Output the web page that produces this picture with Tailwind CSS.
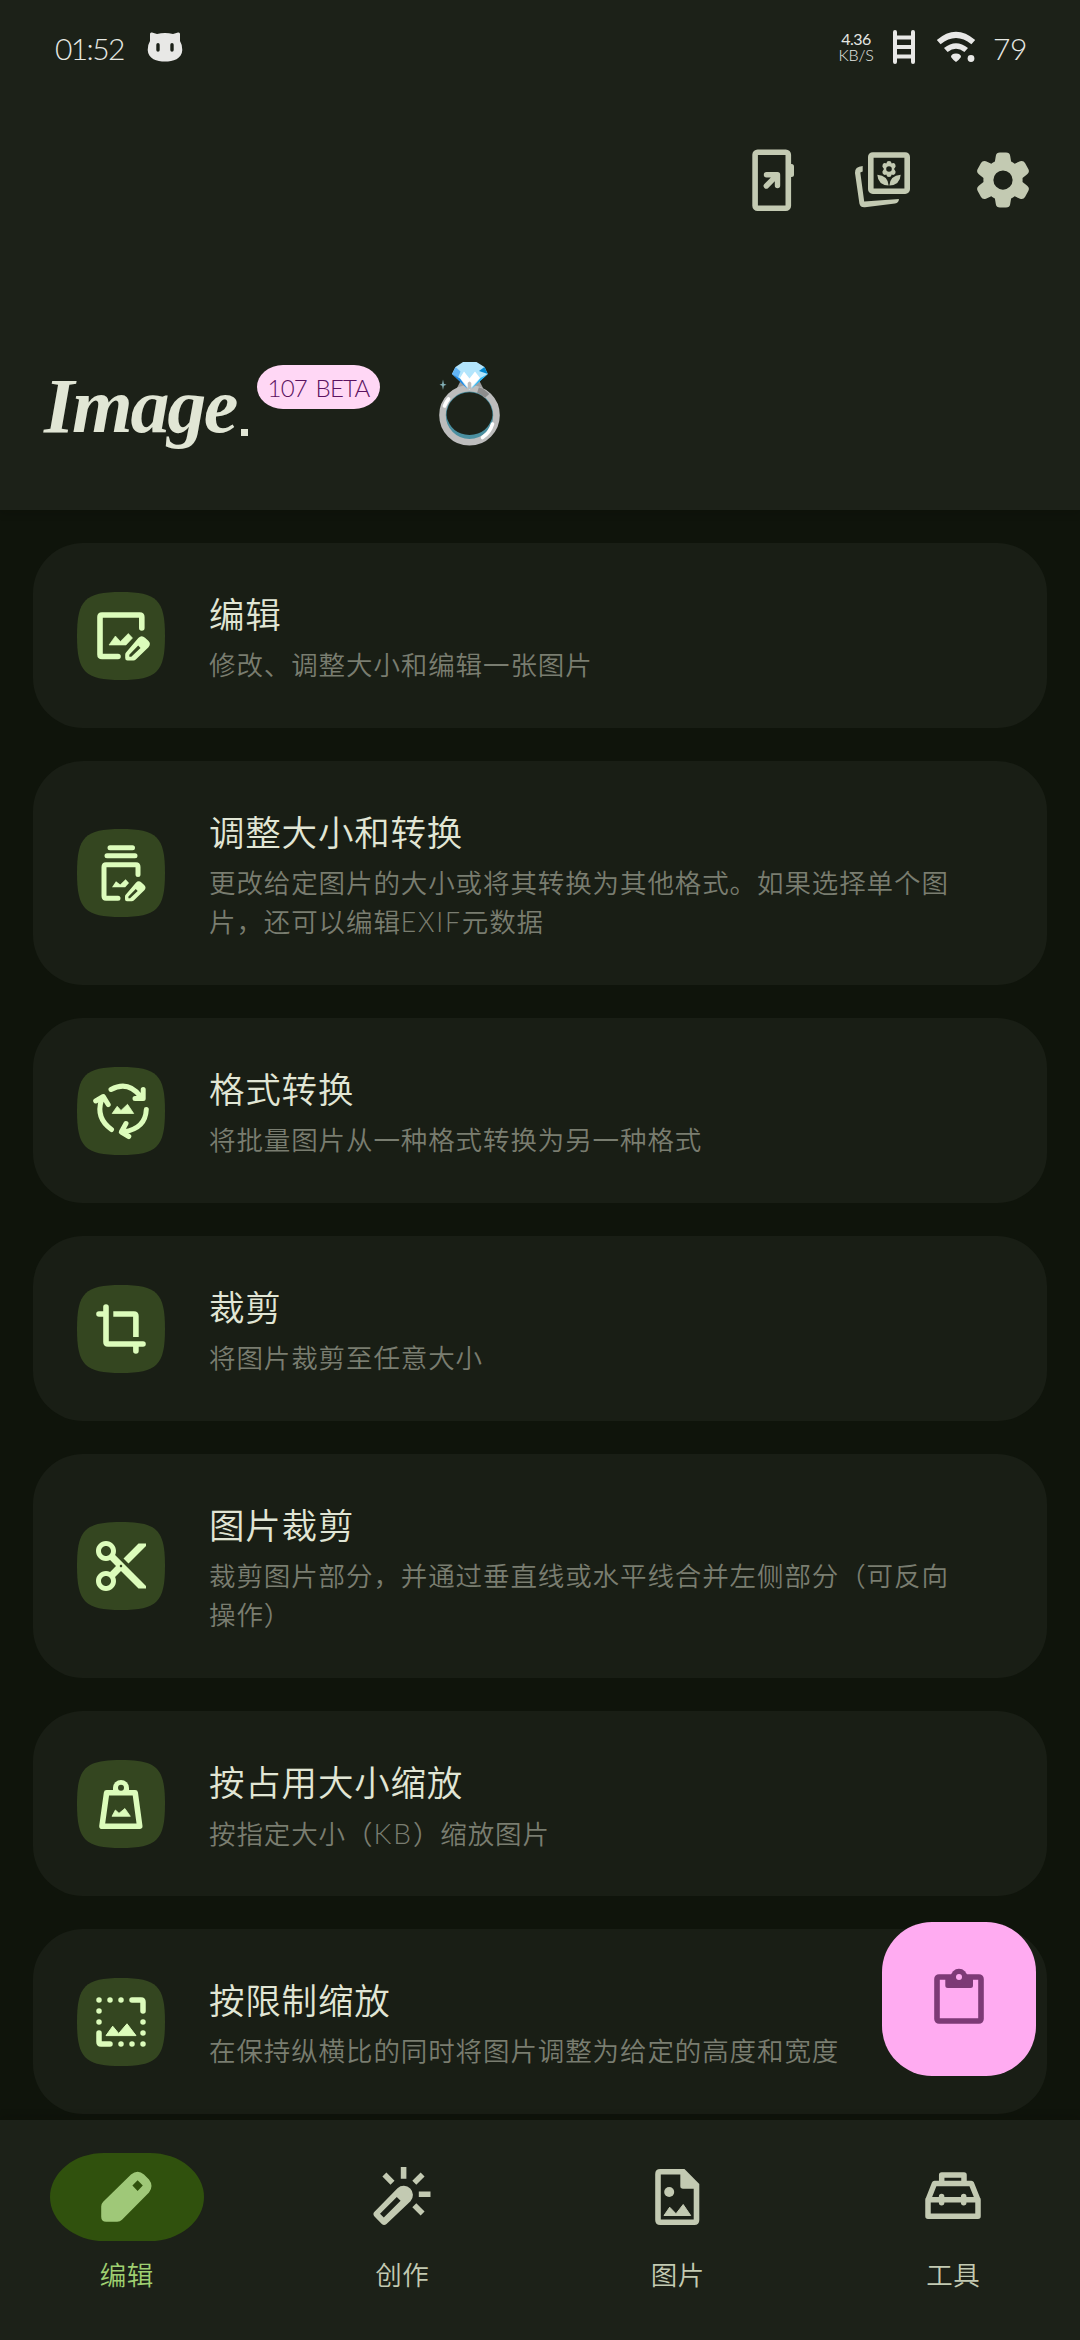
<!DOCTYPE html>
<html lang="zh-CN">
<head>
<meta charset="utf-8">
<title>Image</title>
<script src="https://cdn.jsdelivr.net/npm/@tailwindcss/browser@4"></script>
</head>
<body class="bg-[#0f140b] font-['Lato','Noto_Sans_CJK_SC',sans-serif] font-[350]">
<svg width="0" height="0" class="absolute">
  <defs>
    <path id="squircle" fill="#344620" d="M44 0C80 0 88 8 88 44S80 88 44 88 0 80 0 44 8 0 44 0z"/>
    <path id="pencil" fill-rule="evenodd" d="M48.2 66V62.8Q48.2 61.5 49 60.6L61.3 46Q64.6 42.6 68 45.8L71.3 48.8Q74.4 51.8 71.5 55.2L58.8 67.5Q57.8 68.5 56.5 68.5H50.5Q48.2 68.5 48.2 66zM52.3 64.8H54.3L63.5 56 61.2 53.6 52.3 62.8z"/>
  </defs>
</svg>
<div class="relative flex h-[2340px] w-[1080px] flex-col overflow-hidden">

  <header class="z-10 flex h-[510px] shrink-0 flex-col bg-[#1c2118] shadow-[0_3px_8px_rgba(10,8,4,0.2)]">
    <!-- status bar -->
    <div class="flex h-[94px] items-center pl-[55px] pr-[55px] text-[#e6e8e3]">
      <span class="w-[92px] pt-[2px] text-[30px] leading-none tracking-[-1.600px]">01:52</span>
      <svg class="h-[30px] w-[36px]" viewBox="0 0 36 30" fill="#e8e8e6"><path fill-rule="evenodd" d="M3 9V2Q3 0 5 .5L10 2Q18 .2 26 2L31 .5Q33 0 33 2V9Q35.500 13 35.300 18C35 27 26 29.500 18 29.500S1 27 .7 18Q.5 13 3 9zM11 11a1.700 1.700 0 0 0-1.700 1.700v5.400a1.700 1.700 0 0 0 3.400 0v-5.400A1.700 1.700 0 0 0 11 11zM25 11a1.700 1.700 0 0 0-1.700 1.700v5.400a1.700 1.700 0 0 0 3.400 0v-5.400A1.700 1.700 0 0 0 25 11z"/></svg>
      <div class="ml-auto flex items-center">
        <div class="flex w-[34px] flex-col items-center text-center text-[16px] leading-[16px]">
          <span class="font-normal tracking-[-0.500px]">4.36</span>
          <span class="tracking-[-0.200px]">KB/S</span>
        </div>
        <svg class="ml-[18px] h-[36px] w-[26px]" viewBox="0 0 26 36" fill="none" stroke="#e8e8e6" stroke-width="4" stroke-linecap="round"><path d="M4 3V33M22 3V33M4 8.500H22M4 18H22M4 27.500H22"/></svg>
        <svg class="ml-[19px] h-[32px] w-[40px]" viewBox="0 0 40 32" fill="#e8e8e6"><path d="M.8 9Q20-7.500 39.200 9L35.400 13.300Q20 .8 4.600 13.300zM8 17Q20 7.500 32 17L28.400 21Q20 14.500 11.600 21zM15 26Q15 22.500 20 22.500T25 26Q23 29 20 31 17 29 15 26z"/><circle cx="35" cy="27.500" r="3.400"/></svg>
        <span class="ml-[17px] w-[32px] pt-[2px] text-[30px] leading-none tracking-[-0.500px]">79</span>
      </div>
    </div>
    <!-- toolbar actions -->
    <div class="flex h-[172px] items-center justify-end pr-[44px] text-[#c3cab2]">
      <svg class="mr-[44px] h-[66px] w-[66px]" viewBox="739 147 66 66" fill="none" stroke="currentColor"><rect x="755.100" y="152.200" width="33.200" height="56" rx="2.500" stroke-width="5.600"/><path fill="currentColor" stroke="none" d="M790 164h1.500q2.500 0 2.500 2.500v8q0 2.500-2.500 2.500H790z"/><path d="M766.500 174.700H777.500V185.500M777 175.200 766.300 186" stroke-width="5.400" stroke-linecap="round" stroke-linejoin="round"/></svg>
      <svg class="mr-[55px] h-[66px] w-[66px]" viewBox="849 147 66 66" fill="none" stroke="currentColor"><rect x="870.800" y="155" width="36.400" height="36.200" rx="2" stroke-width="5.600"/><path fill="currentColor" stroke="none" d="M862.700 166V171.500L860.300 172.500 864.200 201.600 898.900 199Q899 202.800 895 203.500L865 207.300Q860.500 207.800 859.400 203.500L855 173Q854.500 166.500 862.700 166z"/><g fill="currentColor" stroke="none"><path fill-rule="evenodd" d="M889 161q2.300 0 2.700 2.400 2.300-1 3.600 1 1 2-.7 3.800l-.7.800.7.800q1.700 1.900.7 3.800-1.300 2-3.600 1-.4 2.500-2.700 2.500t-2.700-2.500q-2.300 1-3.600-1-1-1.900.7-3.800l.7-.8-.7-.8q-1.700-1.800-.7-3.800 1.300-2 3.600-1 .4-2.400 2.700-2.400zM889 166.200a2.800 2.800 0 1 0 0 5.600 2.800 2.800 0 1 0 0-5.600z"/><path d="M877.300 174.700Q888 175.500 888.600 185.500 878 185 877.300 174.700zM900.700 174.700Q890 175.500 889.400 185.500 900 185 900.700 174.700z"/></g></svg>
      <svg class="h-[66px] w-[66px]" viewBox="0 0 24 24" fill="currentColor"><path fill-rule="evenodd" d="M10.900 22q-1.300 0-1.500-1.200l-.35-2.100q-.7-.3-1.300-.75l-1.950.85q-1.200.4-1.800-.6l-1.200-2.200Q2.200 14.900 3.200 14.100l1.700-1.350q-.05-.75 0-1.500L3.200 9.900Q2.200 9.100 2.800 8l1.200-2.200q.6-1 1.800-.6l1.950.85q.6-.45 1.300-.75L9.400 3.200Q9.600 2 10.900 2h2.200q1.300 0 1.500 1.200l.35 2.100q.7.3 1.300.75l1.950-.85q1.200-.4 1.800.6L21.200 8q.6 1.100-.4 1.900l-1.700 1.350q.05.75 0 1.500l1.700 1.350q1 .8.400 1.900L20 18.200q-.6 1-1.800.6l-1.950-.85q-.6.45-1.300.75l-.35 2.100Q14.400 22 13.100 22zM12 8.500a3.500 3.500 0 1 0 0 7 3.500 3.500 0 1 0 0-7z"/></svg>
    </div>
    <!-- title -->
    <div class="flex flex-1 items-start pl-[44px] pt-[94px]">
      <h1 class="flex w-[213px] pt-[2px] text-[#e1e6d5]"><span class="font-['Liberation_Serif',serif] text-[78px] font-bold italic leading-[88px] tracking-[-2.300px]">Image</span><span class="ml-[5px] mt-[67px] h-[7px] w-[7px] overflow-hidden bg-[#e1e6d5] text-[6px] leading-none text-transparent">.</span></h1>
      <span class="mt-[5px] flex h-[44px] w-[123px] items-center justify-center rounded-[26px/22px] bg-[#ffd7f5] pt-px text-[24px] leading-none tracking-[-0.800px] [word-spacing:3px] text-[#5b1260]">107 BETA</span>
      <svg class="-mt-[2px] ml-[53px] h-[90px] w-[72px]" viewBox="432 358 72 90"><path fill="#9e9e9e" d="M456 388 460 380H478L482 388z"/><circle cx="468.500" cy="415.300" r="24" fill="none" stroke="#4a8fa0" stroke-width="2"/><path fill="#4a8fa0" d="M445 415Q445 438 468.500 439.500 492 438 492 415 487 434.500 468.500 435 450 434.500 445 415z"/><circle cx="468.500" cy="415.300" r="27" fill="none" stroke="#bdbdbd" stroke-width="6.600"/><path d="M477 390Q482 391.500 486 396" fill="none" stroke="#8d8d8d" stroke-width="6"/><path d="M443.500 406Q445 402 447.500 399M481.500 437.500Q489 432.500 491.500 424" fill="none" stroke="#fff" stroke-width="3.600" stroke-linecap="round"/><path fill="#b3e5fc" d="M462 362H475.500L483.500 367 486.800 374 468.500 390 451 374 454.500 367z"/><path fill="#64b5f6" d="M451 374 454.500 367 459.500 371.500 457 378z"/><path fill="#1e88e5" d="M451 374 459 378.500 466.500 389z"/><path fill="#0288d1" d="M486.800 374 483.500 367 478 371z"/><path fill="#29b6f6" d="M486.800 374 479.500 378 470.500 389z"/><path fill="#fff" d="M459 378 463 371.500 468.500 378.500 474 371.500 479 378 470.500 387H466.500z"/><path fill="#bdbdbd" d="M466.700 389V383Q468.500 380 470.300 383V389z"/><path fill="#82aeb5" d="M442 379.500 442.900 383.800 445.500 384.800 442.900 385.800 442 390 441.100 385.800 438.500 384.800 441.100 383.800z"/></svg>
    </div>
  </header>

  <main class="flex h-[1610px] shrink-0 flex-col gap-[33px] overflow-hidden px-[33px] pt-[33px]">
    <section class="flex h-[185px] shrink-0 items-center rounded-[50px] bg-[#191e15] pl-[44px]">
      <svg class="h-[88px] w-[88px] shrink-0" viewBox="0 0 88 88" fill="#dcfcbb"><use href="#squircle"/><path d="M64.800 36V25Q64.800 23 62.800 23H25Q23 23 23 25V62.500Q23 64.500 25 64.500H41" fill="none" stroke="#dcfcbb" stroke-width="5.600" stroke-linecap="round"/><path d="M32 53 38.400 44 43.400 49.500 51.300 41.500 55.500 46 49 53z" stroke="#dcfcbb" stroke-width=".6" stroke-linejoin="round"/><use href="#pencil"/></svg>
      <div class="ml-[44px] w-[760px] pt-[4px]"><h2 class="text-[35.500px] leading-[50px] tracking-[0.800px] text-[#e1e6d5]">编辑</h2><p class="mt-[6px] text-[26.500px] leading-[39px] tracking-[0.900px] text-[#797d70]">修改、调整大小和编辑一张图片</p></div>
    </section>

    <section class="flex h-[224px] shrink-0 items-center rounded-[50px] bg-[#191e15] pl-[44px]">
      <svg class="h-[88px] w-[88px] shrink-0" viewBox="0 0 88 88" fill="#dcfcbb"><use href="#squircle"/><path d="M33 18.700H55.500M30 26.800H58M61 45.500V38Q61 35.700 59 35.700H29Q27 35.700 27 38V67Q27 69.200 29 69.200H41" fill="none" stroke="#dcfcbb" stroke-width="5" stroke-linecap="round"/><path d="M35 58.300 39 52.300 43.200 55.500 48.600 50.300 52 54 48.200 58.300z"/><use href="#pencil" transform="translate(8 15.500) scale(.83)"/></svg>
      <div class="ml-[44px] w-[760px] pt-[4px]"><h2 class="text-[35.500px] leading-[50px] tracking-[0.800px] text-[#e1e6d5]">调整大小和转换</h2><p class="mt-[6px] text-[26.500px] leading-[39px] tracking-[0.900px] text-[#797d70]">更改给定图片的大小或将其转换为其他格式。如果选择单个图<br>片，还可以编辑<span class="tracking-[1.800px]">EXIF</span>元数据</p></div>
    </section>

    <section class="flex h-[185px] shrink-0 items-center rounded-[50px] bg-[#191e15] pl-[44px]">
      <svg class="h-[88px] w-[88px] shrink-0" viewBox="0 0 88 88" fill="#dcfcbb"><use href="#squircle"/><path d="M34 22.500Q51 13.500 63 29M66.200 22.500V31.500H58M18.700 34 26.300 29.500 31.200 37.500M24.500 33Q18.500 51 34.500 62.500M49 56.500 44.300 65 51.800 69.500M47 64.700Q68.500 61.500 69.300 42.500" fill="none" stroke="#dcfcbb" stroke-width="5" stroke-linecap="round" stroke-linejoin="round"/><path d="M35.200 46.500 40.200 39.300 44 43.500 50.500 37.300 56.700 46.500z" stroke="#dcfcbb" stroke-width=".8" stroke-linejoin="round"/></svg>
      <div class="ml-[44px] w-[760px] pt-[4px]"><h2 class="text-[35.500px] leading-[50px] tracking-[0.800px] text-[#e1e6d5]">格式转换</h2><p class="mt-[6px] text-[26.500px] leading-[39px] tracking-[0.900px] text-[#797d70]">将批量图片从一种格式转换为另一种格式</p></div>
    </section>

    <section class="flex h-[185px] shrink-0 items-center rounded-[50px] bg-[#191e15] pl-[44px]">
      <svg class="h-[88px] w-[88px] shrink-0" viewBox="0 0 88 88" fill="none" stroke="#dcfcbb" stroke-width="5.600"><use href="#squircle" stroke="none"/><path stroke-linecap="round" d="M29 22V57Q29 59 31 59H66M22 29H28M58.900 60V66"/><path d="M36.300 29H56.900Q58.900 29 58.900 31V52"/></svg>
      <div class="ml-[44px] w-[760px] pt-[4px]"><h2 class="text-[35.500px] leading-[50px] tracking-[0.800px] text-[#e1e6d5]">裁剪</h2><p class="mt-[6px] text-[26.500px] leading-[39px] tracking-[0.900px] text-[#797d70]">将图片裁剪至任意大小</p></div>
    </section>

    <section class="flex h-[224px] shrink-0 items-center rounded-[50px] bg-[#191e15] pl-[44px]">
      <svg class="h-[88px] w-[88px] shrink-0" viewBox="0 0 88 88" fill="#dcfcbb"><use href="#squircle"/><path transform="translate(14 14) scale(2.5)" d="M9.640 7.640c.23-.5.36-1.050.36-1.640 0-2.210-1.790-4-4-4S2 3.790 2 6s1.790 4 4 4c.59 0 1.140-.13 1.640-.36L10 12l-2.360 2.360C7.140 14.130 6.590 14 6 14c-2.210 0-4 1.790-4 4s1.790 4 4 4 4-1.790 4-4c0-.59-.13-1.140-.36-1.640L12 14l7 7h3v-1L9.640 7.640zM6 8c-1.100 0-2-.89-2-2s.9-2 2-2 2 .89 2 2-.9 2-2 2zm0 12c-1.100 0-2-.89-2-2s.9-2 2-2 2 .89 2 2-.9 2-2 2zm6-7.500c-.28 0-.5-.22-.5-.5s.22-.5.5-.5.5.22.5.5-.22.5-.5.5zM19 3l-6 6 2 2 7-7V3z"/></svg>
      <div class="ml-[44px] w-[760px] pt-[4px]"><h2 class="text-[35.500px] leading-[50px] tracking-[0.800px] text-[#e1e6d5]">图片裁剪</h2><p class="mt-[6px] text-[26.500px] leading-[39px] tracking-[0.900px] text-[#797d70]">裁剪图片部分，并通过垂直线或水平线合并左侧部分（可反向<br>操作）</p></div>
    </section>

    <section class="flex h-[185px] shrink-0 items-center rounded-[50px] bg-[#191e15] pl-[44px]">
      <svg class="h-[88px] w-[88px] shrink-0" viewBox="0 0 88 88" fill="#dcfcbb"><use href="#squircle"/><path d="M29.600 32.800H58.200L62.700 66.200H25z" fill="none" stroke="#dcfcbb" stroke-width="5.600" stroke-linejoin="round"/><path d="M44 20a8 8 0 0 1 8 8V33H36V28a8 8 0 0 1 8-8z"/><circle cx="44" cy="27.700" r="3" fill="#344620"/><path d="M35 56.300 38.400 50 42 53.300 47.900 48.500 53.300 56.300z" stroke="#dcfcbb" stroke-width=".8" stroke-linejoin="round"/></svg>
      <div class="ml-[44px] w-[760px] pt-[4px]"><h2 class="text-[35.500px] leading-[50px] tracking-[0.800px] text-[#e1e6d5]">按占用大小缩放</h2><p class="mt-[6px] text-[26.500px] leading-[39px] tracking-[0.900px] text-[#797d70]">按指定大小（<span class="text-[28px] tracking-[2px]">KB</span>）缩放图片</p></div>
    </section>

    <section class="flex h-[185px] shrink-0 items-center rounded-[50px] bg-[#191e15] pl-[44px]">
      <svg class="h-[88px] w-[88px] shrink-0" viewBox="0 0 88 88" fill="#dcfcbb"><use href="#squircle"/><path d="M55 22H64Q66 22 66 24V33M22 55V64Q22 66 24 66H33M22 22h0M33 22h0M44 22h0M22 33h0M22 44h0M66 44h0M66 55h0M66 66h0M55 66h0M44 66h0" fill="none" stroke="#dcfcbb" stroke-width="5.500" stroke-linecap="round"/><path d="M29 57.600 35.700 48.200 41.700 55.500 50 45.800 59 57.600z" stroke="#dcfcbb" stroke-width="1" stroke-linejoin="round"/></svg>
      <div class="ml-[44px] w-[760px] pt-[4px]"><h2 class="text-[35.500px] leading-[50px] tracking-[0.800px] text-[#e1e6d5]">按限制缩放</h2><p class="mt-[6px] text-[26.500px] leading-[39px] tracking-[0.900px] text-[#797d70]">在保持纵横比的同时将图片调整为给定的高度和宽度</p></div>
    </section>
  </main>

  <nav class="z-10 grid h-[220px] shrink-0 grid-cols-4 gap-[22px] bg-[#1c2118] pt-[33px] text-[26.500px] leading-[38px] text-[#c3cab2] shadow-[0_-3px_8px_rgba(10,8,4,0.2)]">
    <div class="flex flex-col items-center text-[#9fd071]">
      <div class="flex h-[88px] w-[154px] items-center justify-center rounded-[54px/44px] bg-[#30510d]"><svg class="h-[66px] w-[66px]" viewBox="0 0 66 66" fill="#9fc878"><path fill-rule="evenodd" d="M7.200 52.700V42.500Q7.200 39.700 9.200 37.700L37 10.500Q43.700 5 50 10.500L55 15.500Q60 22 55 28.500L28 55.700Q26 57.700 23.200 57.700H12.200Q7.200 57.700 7.200 52.700zM43.600 16.300 38.400 21.600 43.600 27 48.800 21.600z"/></svg></div>
      <span class="mt-[15px] tracking-[0.500px]">编辑</span>
    </div>
    <div class="flex flex-col items-center">
      <div class="flex h-[88px] items-center"><svg class="h-[66px] w-[66px]" viewBox="0 0 66 66" fill="currentColor"><path d="M34.600 3V14.700M49.800 30.200H61.500M15.400 10.500 23.500 18.800M53.600 10.500 45.300 18.800M45.300 41.200 53.600 49.500" fill="none" stroke="currentColor" stroke-width="5.600"/><path fill-rule="evenodd" d="M5.500 47.800 28.500 24.200A9.200 9.200 0 0 1 41.500 37.200L17.500 60Q15 62 12.800 60L5.500 52.500Q3.300 50 5.500 47.800zM11 49.800 14.800 53.600 31.600 36.800 27.800 33z"/></svg></div>
      <span class="mt-[15px] tracking-[0.500px]">创作</span>
    </div>
    <div class="flex flex-col items-center">
      <div class="flex h-[88px] items-center"><svg class="h-[66px] w-[66px]" viewBox="0 0 66 66" fill="currentColor"><path d="M13 10V56Q13 58.200 15.200 58.200H49.300Q51.500 58.200 51.500 56V21.200L38.300 7.800H15.200Q13 7.800 13 10z" fill="none" stroke="currentColor" stroke-width="5.600"/><path d="M35.300 8H39L53 22V24.800H38Q35.300 24.800 35.300 22z"/><circle cx="24.200" cy="28" r="5"/><path d="M19 51.500 24.700 43.200 31 49.800 38.200 40.500 45.700 51.500z" stroke="currentColor" stroke-width="1" stroke-linejoin="round"/></svg></div>
      <span class="mt-[15px] tracking-[0.500px]">图片</span>
    </div>
    <div class="flex flex-col items-center">
      <div class="flex h-[88px] items-center"><svg class="h-[66px] w-[66px]" viewBox="0 0 66 66" fill="none" stroke="currentColor" stroke-width="5.500" stroke-linejoin="round" stroke-linecap="round"><path d="M8 36 14.500 19.400H51.300L58 36V52.200H8zM8 35.700H58M21.600 32.500V38.800M43.700 32.500V38.800M21.700 19V10.900H44V19"/></svg></div>
      <span class="mt-[15px] tracking-[0.500px]">工具</span>
    </div>
  </nav>

  <!-- floating paste button -->
  <button class="absolute left-[882px] top-[1922px] z-20 h-[154px] w-[154px] rounded-[50px] bg-[#ffabf1]">
    <svg class="h-[154px] w-[154px]" viewBox="0 0 154 154" fill="#7d3a76"><rect x="55" y="55" width="44" height="44" rx="2" fill="none" stroke="#7d3a76" stroke-width="5.600"/><path d="M63.300 54H69.300A8 8 0 0 1 84.700 54H91V63.500Q91 66 88.500 66H65.800Q63.300 66 63.300 63.500z"/><circle cx="77" cy="55" r="8.300"/><circle cx="77" cy="55" r="3" fill="#ffabf1"/></svg>
  </button>
</div>
</body>
</html>
